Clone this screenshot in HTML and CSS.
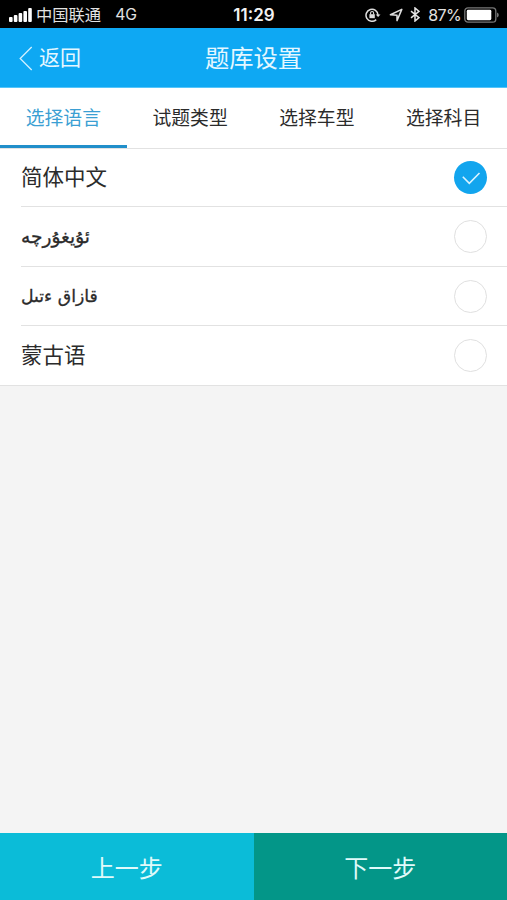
FILE: index.html
```html
<!DOCTYPE html>
<html lang="zh-CN">
<head>
<meta charset="utf-8">
<title>题库设置</title>
<link rel="stylesheet" href="styles.css">
</head>
<body>
<div class="status">
  <div class="status-left">
    <svg class="signal" width="23" height="14" viewBox="0 0 23 14" fill="#fff"><rect x="0" y="9" width="3.6" height="5" rx="1"/><rect x="4.8" y="7" width="3.6" height="7" rx="1"/><rect x="9.6" y="5" width="3.6" height="9" rx="1"/><rect x="14.4" y="3" width="3.6" height="11" rx="1"/><rect x="19.2" y="0" width="3.6" height="14" rx="1"/></svg>
    <span class="carrier">中国联通</span>
    <span class="network">4G</span>
  </div>
  <span class="time">11:29</span>
  <div class="status-right">
    <svg width="16" height="14" viewBox="0 0 16 14" fill="none" stroke="#ddd" stroke-width="1.5"><path d="M11.2 11.6A6 6 0 1 1 13 7"/><path d="M10.7 6.4h4.8L13.1 9z" fill="#ddd" stroke="none"/><rect x="4.4" y="6.2" width="5.4" height="4" fill="#ddd" stroke="none"/><path d="M5.6 6.5V5a1.5 1.5 0 0 1 3 0v1.5" stroke-width="1.1"/></svg>
    <svg class="arrow" width="14" height="14" viewBox="0 0 14 14" fill="none" stroke="#ddd" stroke-width="1.5" stroke-linejoin="round"><path d="M12.8 1.4L8 12.6V7.3L1.4 6.8z"/></svg>
    <svg class="bt" width="10" height="15" viewBox="0 0 10 15" fill="none" stroke="#e5e5e5" stroke-width="1.5"><path d="M1 4.2l8 6.5L5 14V1l4 3.3-8 6.5"/></svg>
    <span class="percent">87%</span>
    <svg class="battery" width="35" height="16" viewBox="0 0 35 16"><rect x=".8" y=".8" width="31" height="14.4" rx="3.2" fill="none" stroke="#777" stroke-width="1.3"/><rect x="2.8" y="2.8" width="24.5" height="10.4" rx="1.4" fill="#fff"/><path d="M33 5.5q1.8.6 1.8 2.5T33 10.5z" fill="#777"/></svg>
  </div>
</div>
<header class="nav">
  <a class="back"><svg width="14" height="25" viewBox="0 0 14 25" fill="none" stroke="#d2f1ff" stroke-width="1.3"><path d="M12.7 1L1.2 12.5 12.7 24"/></svg><span>返回</span></a>
  <h1 class="title">题库设置</h1>
</header>
<nav class="tabs">
  <a class="tab active">选择语言</a>
  <a class="tab">试题类型</a>
  <a class="tab">选择车型</a>
  <a class="tab">选择科目</a>
</nav>
<main class="content">
  <ul class="list">
    <li class="row"><span>简体中文</span><i class="radio checked"><svg width="33" height="33" viewBox="0 0 33 33" fill="none" stroke="#d9f3ff" stroke-width="1.6"><path d="M8.8 15.8l6.5 6.5L25.5 12"/></svg></i></li>
    <li class="row"><span class="arabic uyghur" lang="ug">ئۇيغۇرچە</span><i class="radio"></i></li>
    <li class="row"><span class="arabic kazakh" lang="kk">قازاق ءتىل</span><i class="radio"></i></li>
    <li class="row"><span>蒙古语</span><i class="radio"></i></li>
  </ul>
</main>
<footer class="actions">
  <button class="prev">上一步</button>
  <button class="next">下一步</button>
</footer>
</body>
</html>
```
FILE: styles.css
```css
* { box-sizing: border-box; margin: 0; padding: 0; }
body {
  height: 900px;
  display: flex;
  flex-direction: column;
  overflow: hidden;
  background: #f4f4f4;
  color: #2b2b2b;
  font-family: "Liberation Sans", "Noto Sans CJK SC", sans-serif;
}
.status {
  height: 28px;
  display: grid;
  grid-template-columns: 1fr auto 1fr;
  align-items: center;
  padding: 1px 8px 0 9px;
  background: #000;
  color: #e2e2e2;
  font: 16px/26px Inter, "Noto Sans CJK SC", sans-serif;
}
.status-left, .status-right { display: flex; align-items: center; }
.status-right { justify-content: flex-end; }
.carrier { margin-left: 4px; font-size: 16.3px; }
.network { margin-left: 14px; font-size: 15.7px; }
.time { font-size: 17px; font-weight: 600; color: #f2f2f2; }
.arrow { margin-left: 8px; }
.bt { margin-left: 7px; }
.percent { margin: 0 3px 0 8px; letter-spacing: -.6px; }
.nav {
  height: 60px;
  display: grid;
  grid-template-columns: 1fr auto 1fr;
  align-items: center;
  padding-top: 1px;
  background: #0ea8f3;
  border-bottom: 1px solid #55c5fa;
  color: #e4f7ff;
}
.back { display: flex; align-items: center; padding-left: 19px; gap: 6px; font-size: 21px; line-height: 30px; }
.title { padding-top: 1px; font-size: 24.3px; line-height: 36px; font-weight: 400; }
.tabs { height: 61px; display: flex; background: #fff; border-bottom: 1px solid #e2e2e2; }
.tab { flex: 1; height: 60px; font-size: 18.8px; line-height: 62px; text-align: center; }
.tab.active { color: #3b9fd3; border-bottom: 3px solid #218fca; }
.content { flex: 1; }
.list { list-style: none; background: #fff; padding-left: 21px; border-bottom: 1px solid #e2e2e2; }
.row {
  height: 59px;
  display: flex;
  align-items: center;
  justify-content: space-between;
  padding-right: 20px;
  border-bottom: 1px solid #e2e2e2;
  font-size: 21.5px;
  line-height: 32px;
}
.row:first-child { height: 58px; }
.row:nth-child(2) { height: 60px; }
.row:last-child { height: 59px; border-bottom: 0; }
.arabic { font-family: "DejaVu Sans", sans-serif; -webkit-text-stroke: .3px #2b2b2b; }
.uyghur { font-size: 18.6px; }
.kazakh { font-size: 17.3px; }
.radio { width: 33px; height: 33px; border: 1.5px solid #e0e0e0; border-radius: 50%; }
.radio.checked { border: 0; background: #12a5ee; }
.radio svg { display: block; }
.actions { height: 67px; display: flex; }
.actions button { flex: 1; border: 0; color: #e0fafa; font: 24px/36px "Noto Sans CJK SC", sans-serif; }
.prev { background: #0bbcd8; }
.next { background: #039688; }
```
